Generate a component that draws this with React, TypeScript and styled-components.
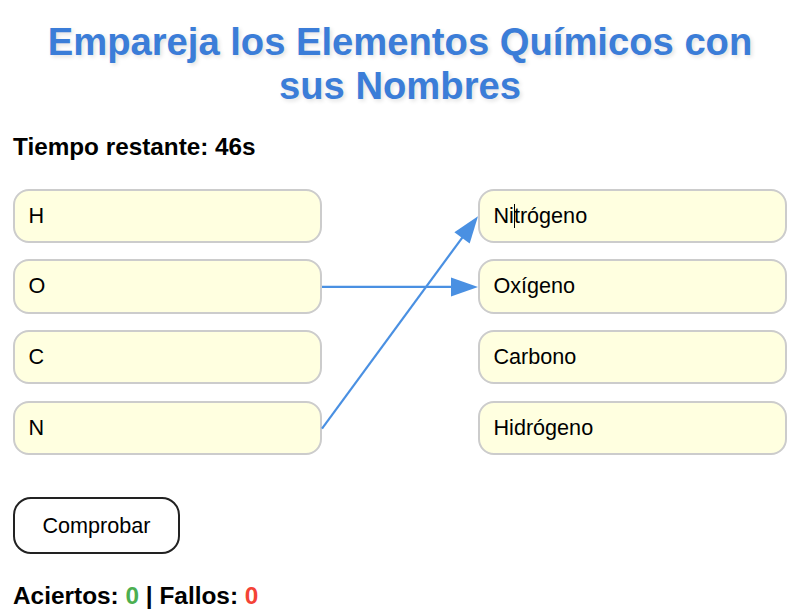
import React from "react";
import styled, { createGlobalStyle } from "styled-components";

const GlobalStyle = createGlobalStyle`
  html, body { margin: 0; padding: 0; background: #ffffff; }
  body { font-family: "Liberation Sans", Arial, sans-serif; color: #000; }
`;

const Page = styled.div`
  padding: 20px 9px 0 13px;
  display: flex;
  flex-direction: column;
`;

const Title = styled.h1`
  margin: 0;
  text-align: center;
  font-size: 38.2px;
  line-height: 44px;
  font-weight: bold;
  color: #3b7dd8;
  text-shadow: 2px 2px 4px rgba(0, 0, 0, 0.12);
`;

const Timer = styled.div`
  margin-top: 25px;
  font-size: 24.3px;
  line-height: 28px;
  font-weight: bold;
`;

const Board = styled.div`
  position: relative;
  margin-top: 27.5px;
  display: flex;
  justify-content: space-between;
`;

const Column = styled.div`
  width: 309px;
  display: flex;
  flex-direction: column;
  gap: 16.5px;
`;

const Item = styled.div`
  box-sizing: border-box;
  height: 54.3px;
  padding: 0 13.5px;
  display: flex;
  align-items: center;
  border: 2px solid #cccccc;
  border-radius: 16px;
  background: #ffffe0;
  font-size: 21.6px;
`;

const Caret = styled.span`
  display: inline-block;
  width: 1px;
  height: 24px;
  margin-right: -1px;
  background: #000;
  vertical-align: -5px;
`;

const Lines = styled.svg`
  position: absolute;
  left: 0;
  top: 0;
  width: 100%;
  height: 100%;
  pointer-events: none;
  overflow: visible;
`;

const CheckButton = styled.button`
  align-self: flex-start;
  margin-top: 42.3px;
  box-sizing: border-box;
  width: 167px;
  height: 57px;
  border: 2px solid #222;
  border-radius: 18px;
  background: #fff;
  font-family: "Liberation Sans", Arial, sans-serif;
  font-size: 21.6px;
  color: #000;
  padding: 0;
`;

const Score = styled.div`
  margin-top: 28px;
  font-size: 24.4px;
  line-height: 28px;
  font-weight: bold;
`;

const Num = styled.span<{ $tone: "good" | "bad" }>`
  color: ${(p) => (p.$tone === "good" ? "#4caf50" : "#f44336")};
`;

const ROW = 70.8;
const H = 54.3;
const LEFT_X = 309;
const RIGHT_X = 465;

const connections: [number, number][] = [
  [1, 1],
  [3, 0],
];

function Arrow({ from, to }: { from: number; to: number }) {
  const x1 = LEFT_X;
  const y1 = from * ROW + H / 2;
  const x2 = RIGHT_X;
  const y2 = to * ROW + H / 2;
  const dx = x2 - x1;
  const dy = y2 - y1;
  const len = Math.hypot(dx, dy);
  const ux = dx / len;
  const uy = dy / len;
  const hl = 27;
  const hw = 9.5;
  const bx = x2 - ux * hl;
  const by = y2 - uy * hl;
  const px = -uy * hw;
  const py = ux * hw;
  return (
    <g>
      <line x1={x1} y1={y1} x2={bx + ux * 2} y2={by + uy * 2} stroke="#4a90e2" strokeWidth={2.2} />
      <polygon
        points={`${x2},${y2} ${bx + px},${by + py} ${bx - px},${by - py}`}
        fill="#4a90e2"
      />
    </g>
  );
}

export default function App() {
  const symbols = ["H", "O", "C", "N"];
  return (
    <>
      <GlobalStyle />
      <Page>
        <Title>Empareja los Elementos Químicos con sus Nombres</Title>
        <Timer>Tiempo restante: 46s</Timer>
        <Board>
          <Column>
            {symbols.map((s) => (
              <Item key={s}>{s}</Item>
            ))}
          </Column>
          <Column>
            <Item>
              <span>
                Ni
                <Caret />
                trógeno
              </span>
            </Item>
            <Item>Oxígeno</Item>
            <Item>Carbono</Item>
            <Item>Hidrógeno</Item>
          </Column>
          <Lines>
            {connections.map(([f, t]) => (
              <Arrow key={`${f}-${t}`} from={f} to={t} />
            ))}
          </Lines>
        </Board>
        <CheckButton>Comprobar</CheckButton>
        <Score>
          Aciertos: <Num $tone="good">0</Num> | Fallos: <Num $tone="bad">0</Num>
        </Score>
      </Page>
    </>
  );
}
